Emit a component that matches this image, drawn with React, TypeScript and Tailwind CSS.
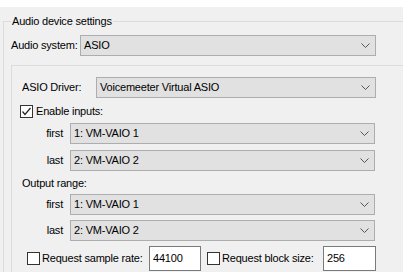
import { ReactNode } from 'react';

function Chevron() {
  return (
    <svg width="9" height="5" viewBox="0 0 9 5" className="shrink-0">
      <path d="M0.5 0.5 L4.5 4.5 L8.5 0.5" fill="none" stroke="#555" strokeWidth="1" />
    </svg>
  );
}

function Combo({ value, className = '' }: { value: string; className?: string }) {
  return (
    <div
      className={`h-[21px] flex items-center justify-between pl-[3px] pr-[5px] bg-[#e1e1e1] border border-[#adadad] ${className}`}
    >
      <span>{value}</span>
      <Chevron />
    </div>
  );
}

function CheckBox({ checked = false }: { checked?: boolean }) {
  return (
    <div className="w-[13px] h-[13px] border border-[#333] bg-white flex items-center justify-center shrink-0">
      {checked && (
        <svg width="11" height="11" viewBox="0 0 11 11">
          <path d="M1.5 5.5 L4 8.5 L9.5 2" fill="none" stroke="#222" strokeWidth="1.2" />
        </svg>
      )}
    </div>
  );
}

function RangeRow({ label, value, className = '' }: { label: string; value: string; className?: string }) {
  return (
    <div className={`flex items-center ${className}`}>
      <span className="w-[42px] text-right pr-[1px]">{label}</span>
      <Combo value={value} className="ml-[6px] w-[305px]" />
    </div>
  );
}

function Field({ children, className = '' }: { children: ReactNode; className?: string }) {
  return (
    <div className={`h-[25px] flex items-center px-[3px] bg-white border border-[#7a7a7a] ${className}`}>
      {children}
    </div>
  );
}

export default function App() {
  return (
    <div className="w-[403px] h-[272px] overflow-hidden bg-[#f0f0f0] text-black text-[11px] tracking-[-0.2px] font-['Liberation_Sans',Arial,sans-serif]">
      <div className="h-[7px] bg-white" />

      <div className="relative mt-[14px] ml-[3px] w-[430px] border-t border-l border-[#dcdcdc] pb-[40px]">
        <span className="absolute left-[7px] top-[-8px] px-[1px] bg-[#f0f0f0] leading-[14px]">
          Audio device settings
        </span>

        <div className="flex items-center mt-[13px] pl-[7px]">
          <span className="w-[69px]">Audio system:</span>
          <Combo value="ASIO" className="w-[296px]" />
        </div>

        <div className="mt-[9px] ml-[7px] border-t border-l border-[#dcdcdc] pl-[10px] pb-[20px]">
          <div className="flex items-center mt-[11px]">
            <span className="w-[74px]">ASIO Driver:</span>
            <Combo value="Voicemeeter Virtual ASIO" className="w-[280px]" />
          </div>

          <div className="flex items-center gap-[3px] h-[16px] mt-[5px] -ml-[2px]">
            <CheckBox checked />
            <span>Enable inputs:</span>
          </div>

          <RangeRow label="first" value="1: VM-VAIO 1" className="mt-[4px]" />
          <RangeRow label="last" value="2: VM-VAIO 2" className="mt-[6px]" />

          <div className="h-[16px] flex items-center mt-[4px]">Output range:</div>

          <RangeRow label="first" value="1: VM-VAIO 1" className="mt-[3px]" />
          <RangeRow label="last" value="2: VM-VAIO 2" className="mt-[5px]" />

          <div className="flex items-center mt-[5px] pl-[5px]">
            <CheckBox />
            <span className="ml-[2px] w-[107px]">Request sample rate:</span>
            <Field className="w-[52px]">44100</Field>
            <div className="ml-[6px]">
              <CheckBox />
            </div>
            <span className="ml-[2px] w-[101px]">Request block size:</span>
            <Field className="w-[53px]">256</Field>
          </div>
        </div>
      </div>
    </div>
  );
}
